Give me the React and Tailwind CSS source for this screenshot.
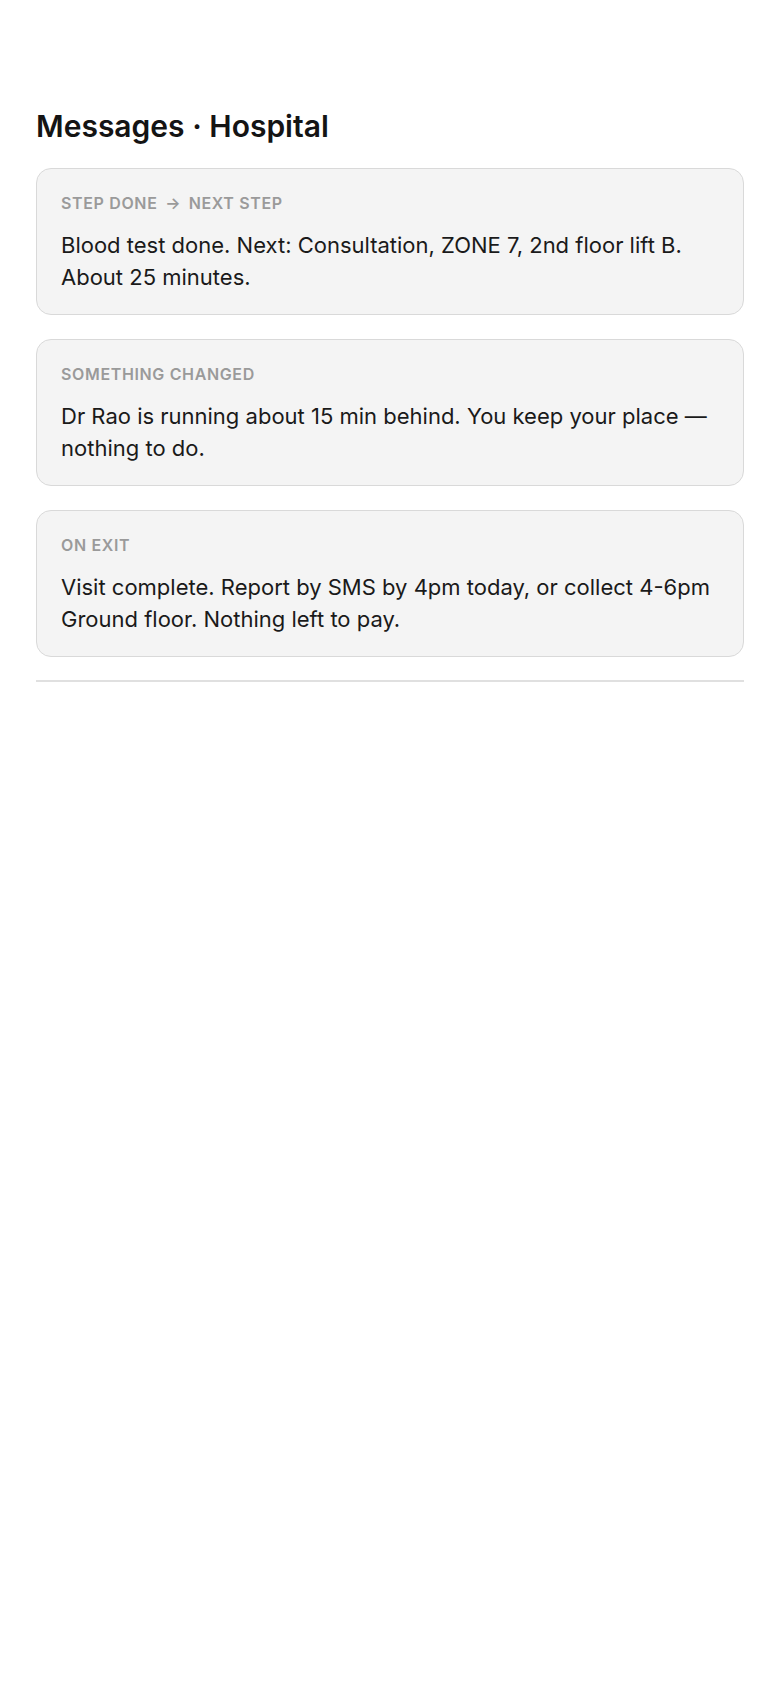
import React from "react";

const messages = [
  {
    label: (
      <>
        Step done <span className="mx-[3px]">→</span> Next step
      </>
    ),
    text: "Blood test done. Next: Consultation, ZONE 7, 2nd floor lift B. About 25 minutes.",
  },
  {
    label: "Something changed",
    text: "Dr Rao is running about 15 min behind. You keep your place — nothing to do.",
  },
  {
    label: "On exit",
    text: "Visit complete. Report by SMS by 4pm today, or collect 4-6pm Ground floor. Nothing left to pay.",
  },
];

export default function App() {
  return (
    <div className="min-h-screen bg-white px-9 pt-[107px] font-['Inter',sans-serif] text-[#1a1a1a]">
      <h1 className="text-[30px] font-semibold leading-[38px] text-[#141414]">
        Messages · Hospital
      </h1>

      <div className="mt-[23px] flex flex-col gap-6">
        {messages.map((m, i) => (
          <div
            key={i}
            className="rounded-[15px] border border-[#d9d9d9] bg-[#f4f4f4] px-6 pt-6 pb-[21px]"
          >
            <div className="text-[16px] font-semibold uppercase leading-5 tracking-[0.04em] text-[#9a9a9a]">
              {m.label}
            </div>
            <p className="mt-4 text-[22px] leading-[32px]">{m.text}</p>
          </div>
        ))}
      </div>

      <div className="mt-[23px] border-t-2 border-[#e0e0e0]" />
    </div>
  );
}
